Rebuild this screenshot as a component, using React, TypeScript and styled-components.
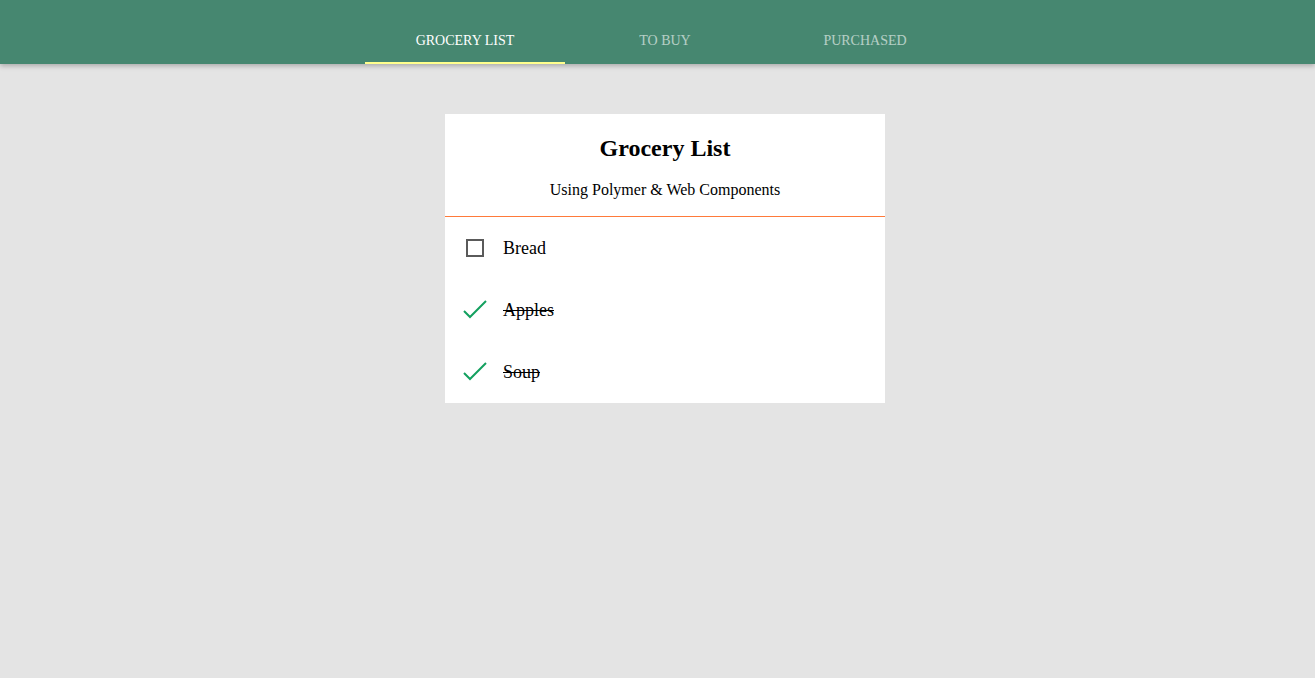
import styled, { createGlobalStyle } from "styled-components"

const GlobalStyle = createGlobalStyle`
    html, body {
        margin: 0;
        padding: 0;
        background: #e4e4e4;
        font-family: "Liberation Serif", "Times New Roman", serif;
    }
`

const Page = styled.div`
    min-height: 678px;
    padding-left: 15px;
    background: #e4e4e4;
`

const Header = styled.header`
    height: 64px;
    margin-left: -15px;
    padding-left: 15px;
    background: #468770;
    box-shadow: 0 2px 5px rgba(0, 0, 0, 0.26);
    display: flex;
    align-items: flex-end;
    justify-content: center;
    position: relative;
    z-index: 1;
`

const Tabs = styled.nav`
    display: flex;
    height: 48px;
`

const Tab = styled.div<{ $active?: boolean }>`
    width: 200px;
    display: flex;
    align-items: center;
    justify-content: center;
    font-size: 14px;
    text-transform: uppercase;
    color: #fff;
    opacity: ${(p) => (p.$active ? 1 : 0.6)};
    border-bottom: 2px solid ${(p) => (p.$active ? "#ffff8d" : "transparent")};
    box-sizing: border-box;
    padding-top: 4px;
    cursor: pointer;
`

const Card = styled.section`
    width: 440px;
    margin: 50px auto 0;
    background: #fff;
`

const CardHeader = styled.div`
    text-align: center;
    padding: 20px 0 17px;
`

const Divider = styled.div`
    height: 1px;
    background: #ff7a3a;
`

const Title = styled.h1`
    margin: 0;
    font-size: 24px;
    font-weight: bold;
    line-height: 28px;
    color: #000;
`

const Subtitle = styled.p`
    margin: 18px 0 0;
    font-size: 16px;
    line-height: 19px;
    color: #000;
`

const Item = styled.div`
    height: 62px;
    display: flex;
    align-items: center;
    padding-left: 18px;
    gap: 16px;
`

const IconBox = styled.div`
    width: 24px;
    height: 24px;
    display: flex;
    align-items: center;
    justify-content: center;
`

const Box = styled.div`
    width: 18px;
    height: 18px;
    box-sizing: border-box;
    border: 2px solid #5a5a5a;
`

const Label = styled.span<{ $done?: boolean }>`
    font-size: 18px;
    color: #000;
    text-decoration: ${(p) => (p.$done ? "line-through" : "none")};
`

const Check = () => (
    <svg width="24" height="24" viewBox="0 0 24 24">
        <polyline points="1,13 7,19 23,3" fill="none" stroke="#13a05f" strokeWidth="2" />
    </svg>
)

const items = [
    { name: "Bread", done: false },
    { name: "Apples", done: true },
    { name: "Soup", done: true },
]

export default function App() {
    return (
        <>
            <GlobalStyle />
            <Page>
                <Header>
                    <Tabs>
                        <Tab $active>Grocery List</Tab>
                        <Tab>To Buy</Tab>
                        <Tab>Purchased</Tab>
                    </Tabs>
                </Header>
                <Card>
                    <CardHeader>
                        <Title>Grocery List</Title>
                        <Subtitle>Using Polymer &amp; Web Components</Subtitle>
                    </CardHeader>
                    <Divider />
                    {items.map((item) => (
                        <Item key={item.name}>
                            <IconBox>{item.done ? <Check /> : <Box />}</IconBox>
                            <Label $done={item.done}>{item.name}</Label>
                        </Item>
                    ))}
                </Card>
            </Page>
        </>
    )
}
